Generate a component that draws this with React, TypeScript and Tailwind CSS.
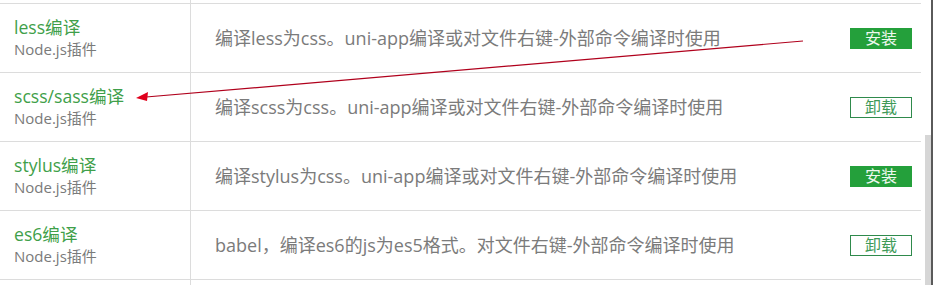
const rows = [
  {
    title: "less编译",
    desc: "编译less为css。uni-app编译或对文件右键-外部命令编译时使用",
    installed: false,
  },
  {
    title: "scss/sass编译",
    desc: "编译scss为css。uni-app编译或对文件右键-外部命令编译时使用",
    installed: true,
  },
  {
    title: "stylus编译",
    desc: "编译stylus为css。uni-app编译或对文件右键-外部命令编译时使用",
    installed: false,
  },
  {
    title: "es6编译",
    desc: "babel，编译es6的js为es5格式。对文件右键-外部命令编译时使用",
    installed: true,
  },
];

const font = { fontFamily: '"Open Sans", "Noto Sans CJK SC", sans-serif' };

function PluginRow({ title, desc, installed }: (typeof rows)[number]) {
  return (
    <div className="flex h-[69px] border-b border-[#dcdcdc]">
      <div className="flex w-[191px] shrink-0 flex-col justify-center border-r border-[#dcdcdc] pl-[14px] pb-[2px]">
        <span className="text-[17.6px] leading-[24px] text-[#3f9f4a]">{title}</span>
        <span className="text-[15px] leading-[21px] text-[#7a7a7a]">Node.js插件</span>
      </div>
      <div className="flex flex-1 items-center justify-between pl-[24px] pr-[9px]">
        <span className="text-[18px] text-[#7b7b7b]">{desc}</span>
        {installed ? (
          <button className="flex h-[21px] w-[62px] items-center justify-center border border-[#2f8a4c] bg-white text-[16px] text-[#3f9a58]">
            卸载
          </button>
        ) : (
          <button className="flex h-[21px] w-[62px] items-center justify-center bg-[#24a03b] text-[16px] text-[#eef8ee]">
            安装
          </button>
        )}
      </div>
    </div>
  );
}

export default function App() {
  return (
    <div className="relative flex h-[285px] w-[933px] overflow-hidden bg-white" style={font}>
      <div className="flex w-[921px] flex-col">
        <div className="flex h-[4px] shrink-0 border-b border-[#dcdcdc]">
          <div className="w-[191px] border-r border-[#dcdcdc]" />
        </div>
        {rows.map((r) => (
          <PluginRow key={r.title} {...r} />
        ))}
        <div className="flex flex-1">
          <div className="w-[191px] border-r border-[#dcdcdc]" />
        </div>
      </div>
      <div className="flex w-[12px] justify-end">
        <div className="flex w-[6px] flex-col pt-[135px]">
          <div className="flex-1 bg-[#d6d6d6]" />
        </div>
        <div className="w-[2px] bg-[#5a5a5a]" />
      </div>
      <svg className="absolute left-0 top-0" width="933" height="285">
        <line x1="803" y1="41" x2="146" y2="97" stroke="#b0001c" strokeWidth="1.2" />
        <polygon points="136,98 148,92 147,101" fill="#e0001c" />
      </svg>
    </div>
  );
}
